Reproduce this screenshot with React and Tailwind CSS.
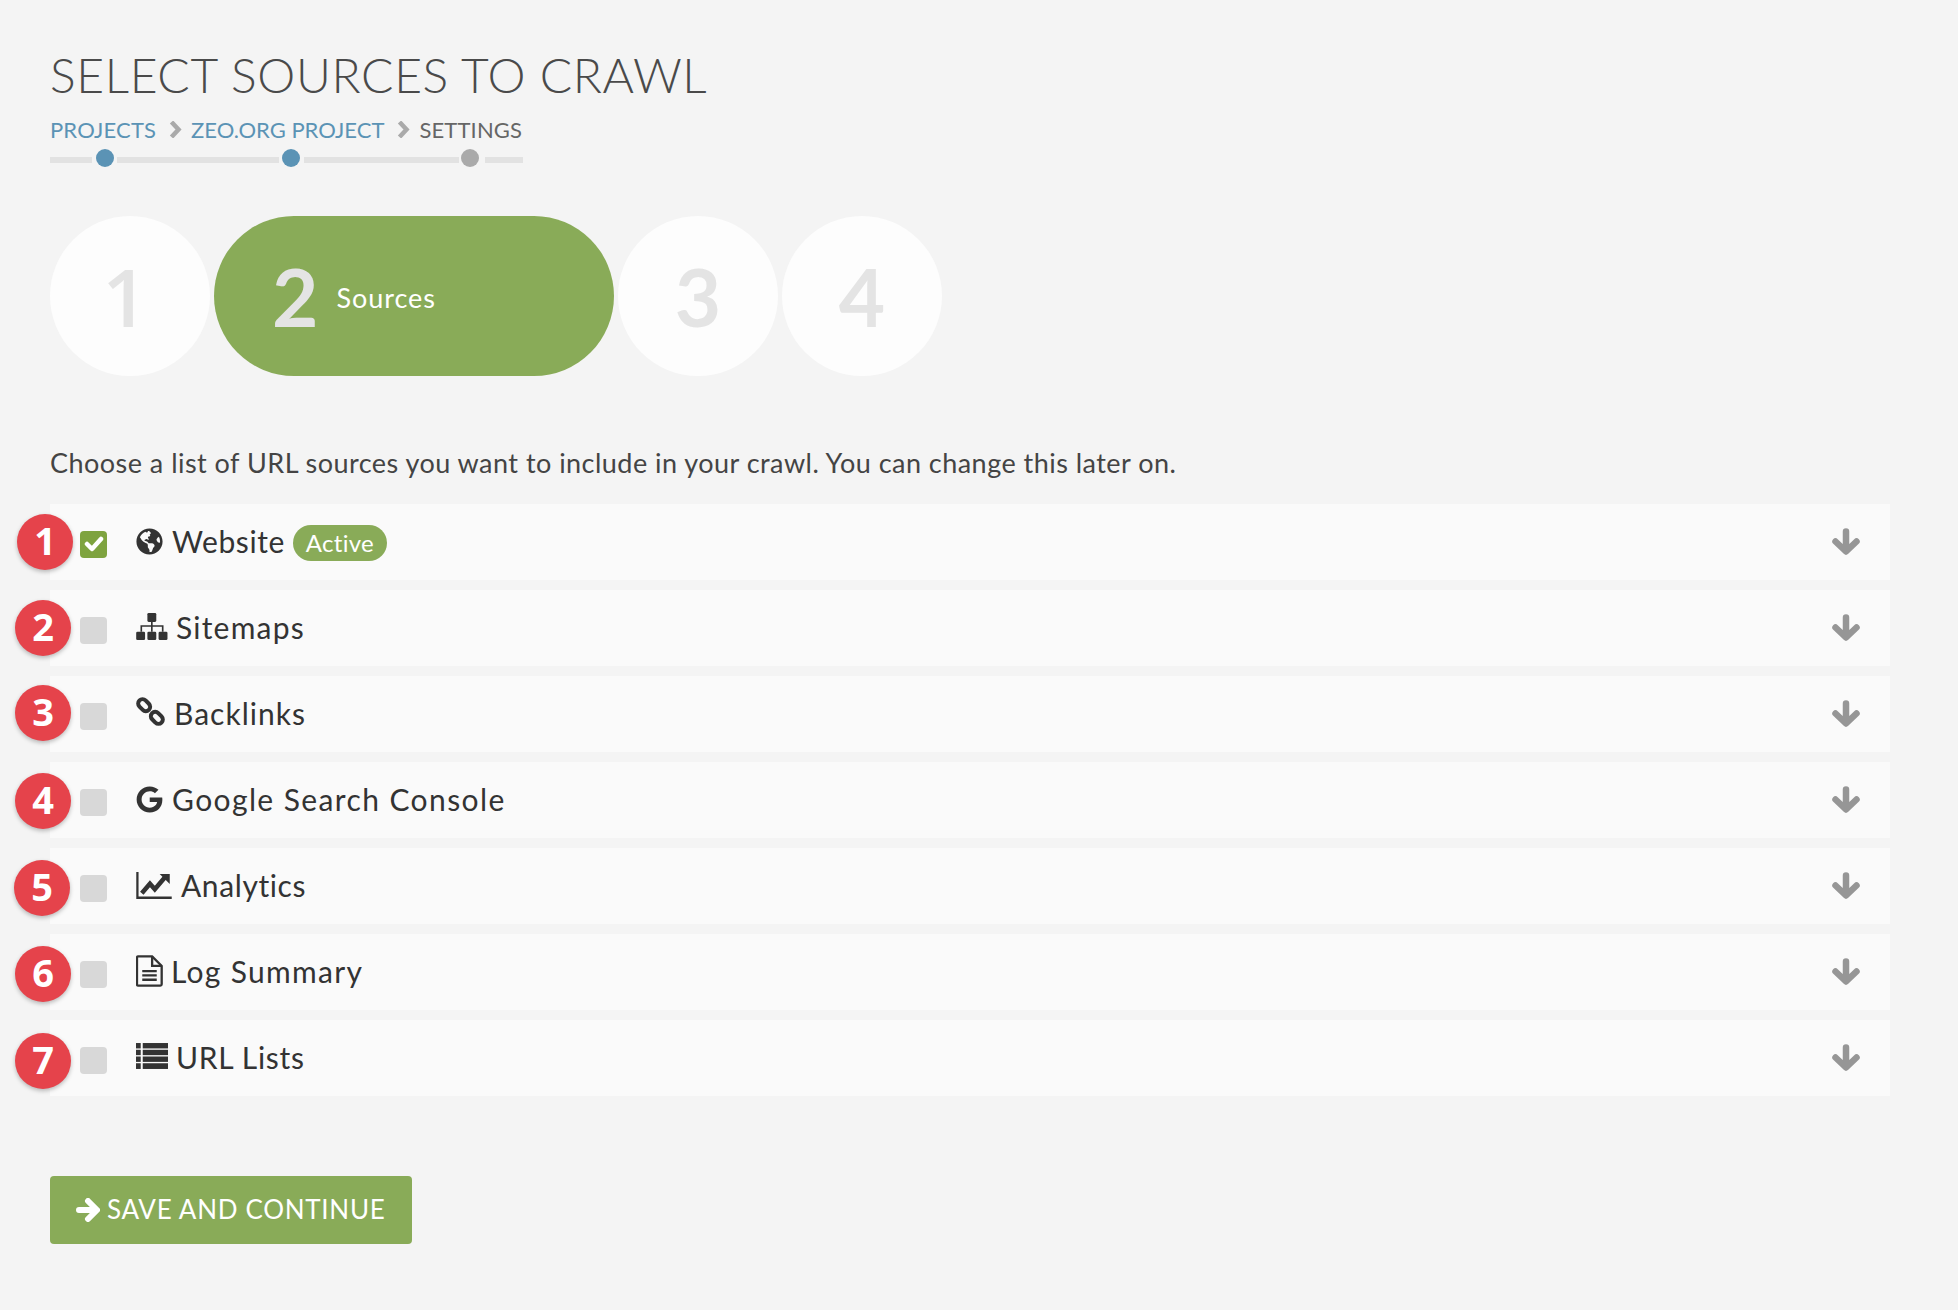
import React from 'react';
import { FaGlobeAmericas, FaGoogle } from 'react-icons/fa';

// hand drawn icons, the older font-awesome shapes are not in the package
const SitemapIcon = ({ className }) => (
  <svg viewBox="0 0 96 82" className={className} fill="currentColor">
    <rect x="34" y="0" width="27" height="27" rx="4" />
    <rect x="0" y="57" width="27" height="25" rx="4" />
    <rect x="34" y="57" width="27" height="25" rx="4" />
    <rect x="68" y="57" width="27" height="25" rx="4" />
    <path d="M45 27h5v10h33v20h-5V42H50v15h-5V42H18v15h-5V37h32z" />
  </svg>
);

const LinkIcon = ({ className }) => (
  <svg viewBox="0 0 87 87" className={className} fill="none" stroke="currentColor" strokeWidth="12">
    <rect x="-20" y="-13" width="40" height="26" rx="13" transform="translate(24.500 24.500) rotate(45)" />
    <rect x="-20" y="-13" width="40" height="26" rx="13" transform="translate(62.500 62.500) rotate(45)" />
  </svg>
);

const ChartIcon = ({ className }) => (
  <svg viewBox="0 0 109 83" className={className} fill="currentColor">
    <path d="M0 0h7v75h102v8H0z" />
    <path d="M17 65l25-29 15 17 30-35" fill="none" stroke="currentColor" strokeWidth="14" />
    <path d="M72 6h31v31z" />
  </svg>
);

const FileIcon = ({ className }) => (
  <svg viewBox="0 0 82 97" className={className} fill="none" stroke="currentColor" strokeWidth="7">
    <path d="M7 4h42l29 29v56a4 4 0 0 1-4 4H7a4 4 0 0 1-4-4V8a4 4 0 0 1 4-4z" />
    <path d="M49 4v29h29" />
    <path d="M19 49h44M19 62h44M19 75h44" />
  </svg>
);

const ListIcon = ({ className }) => (
  <svg viewBox="0 0 95 77" className={className} fill="currentColor">
    <rect x="0" y="0" width="14" height="16" />
    <rect x="20" y="0" width="75" height="16" />
    <rect x="0" y="20" width="14" height="16" />
    <rect x="20" y="20" width="75" height="16" />
    <rect x="0" y="40" width="14" height="16" />
    <rect x="20" y="40" width="75" height="16" />
    <rect x="0" y="60" width="14" height="17" />
    <rect x="20" y="60" width="75" height="17" />
  </svg>
);

const CheckIcon = ({ className }) => (
  <svg viewBox="0 0 20 16" className={className} fill="none" stroke="currentColor" strokeWidth="4.500" strokeLinecap="round" strokeLinejoin="round">
    <path d="M3 8l5 5 9-10" />
  </svg>
);

const DownArrow = ({ className }) => (
  <svg viewBox="0 0 28 27" className={className} fill="none" stroke="currentColor" strokeWidth="6.500" strokeLinecap="round" strokeLinejoin="round">
    <path d="M14 3.500v19M3.500 13.500l10.500 10 10.500-10" />
  </svg>
);

const RightArrow = ({ className }) => (
  <svg viewBox="0 0 24 24" className={className} fill="none" stroke="currentColor" strokeWidth="6" strokeLinecap="round" strokeLinejoin="round">
    <path d="M3 12h17M12 3l9 9-9 9" />
  </svg>
);

const Chevron = () => (
  <svg viewBox="0 0 13 17" className="ml-[13px] mr-[9px] w-[13px] h-[17px] text-[#aaa]" fill="none" stroke="currentColor" strokeWidth="4.500">
    <path d="M2.500 1l7 7.500-7 7.500" />
  </svg>
);

const sources = [
  { name: 'Website', badge: 'left-[-33px] top-[10px]', text: 'tracking-[0.6px]', icon: <FaGlobeAmericas className="w-[27px] h-[27px] mr-[9px]" />, checked: true, active: true },
  { name: 'Sitemaps', badge: 'left-[-35px] top-[10px]', text: 'tracking-[1.200px]', icon: <SitemapIcon className="w-[32px] h-[27px] mr-[8px] -mt-[2px]" /> },
  { name: 'Backlinks', badge: 'left-[-35px] top-[9px]', text: 'tracking-[1px]', icon: <LinkIcon className="w-[29px] h-[29px] mr-[9px] -mt-[4px]" /> },
  { name: 'Google Search Console', badge: 'left-[-35px] top-[11px]', text: 'tracking-[1.400px]', icon: <FaGoogle className="w-[27px] h-[27px] mr-[9px]" /> },
  { name: 'Analytics', badge: 'left-[-36px] top-[12px]', text: 'tracking-[0.6px]', icon: <ChartIcon className="w-[36px] h-[27px] mr-[9px]" /> },
  { name: 'Log Summary', badge: 'left-[-35px] top-[12px]', text: 'tracking-[1.300px]', icon: <FileIcon className="w-[27px] h-[32px] mr-[8px]" /> },
  { name: 'URL Lists', badge: 'left-[-35px] top-[13px]', text: 'tracking-[0.7px]', icon: <ListIcon className="w-[32px] h-[26px] mr-[8px] -mt-[2px]" /> },
];

const SourceRow = ({ index, source }) => (
  <div className="relative flex items-center h-[76px] mb-[10px] bg-[#fafafa]">
    <div className={`absolute ${source.badge} w-[56px] h-[56px] rounded-full bg-[#e5434b] shadow-[0_2px_4px_rgba(0,0,0,0.25)] flex items-center justify-center pb-[3px] text-white text-[38px] font-bold font-['Open_Sans']`}>
      {index + 1}
    </div>
    {source.checked ? (
      <div className="ml-[30px] mt-[4px] w-[27px] h-[27px] rounded-[4px] bg-[#7ea33f] flex items-center justify-center">
        <CheckIcon className="w-[20px] h-[16px] text-white" />
      </div>
    ) : (
      <div className="ml-[30px] mt-[4px] w-[27px] h-[27px] rounded-[4px] bg-[#d8d8d8]" />
    )}
    <div className={`ml-[29px] flex items-center text-[#333] text-[30px] -mt-[2px] ${source.text}`}>
      {source.icon}
      <span>{source.name}</span>
      {source.active && (
        <span className="ml-[8px] mt-[3px] h-[36px] w-[94px] rounded-full bg-[#89ab58] text-white text-[24px] tracking-[0.3px] flex items-center justify-center">
          Active
        </span>
      )}
    </div>
    <DownArrow className="ml-auto mr-[30px] -mt-[1px] w-[28px] h-[27px] text-[#969696]" />
  </div>
);

const StepCircle = ({ n }) => (
  <div className="w-[160px] h-[160px] rounded-full bg-[#fdfdfd] flex items-center justify-center text-[#e4e4e4] text-[80px] font-bold leading-none">
    {n}
  </div>
);

export default function App() {
  return (
    <div className="min-h-[1310px] bg-[#f4f4f4] pl-[50px] pr-[68px] pt-[44px] text-[#444]" style={{ fontFamily: '"Lato", sans-serif' }}>
      <h1 className="text-[48px] leading-[62px] font-light text-[#4a4a4a] tracking-[0.62px]">SELECT SOURCES TO CRAWL</h1>

      <div className="flex items-center mt-[8px] h-[30px] text-[22px] tracking-[0.15px]">
        <span className="text-[#5b93b5]">PROJECTS</span>
        <Chevron />
        <span className="text-[#5b93b5] tracking-[0px]">ZEO.ORG PROJECT</span>
        <Chevron />
        <span className="text-[#666]">SETTINGS</span>
      </div>

      {/* progress under the breadcrumb */}
      <div className="flex items-center mt-[5px] h-[18px]">
        <div className="w-[42px] h-[6px] mt-[3px] bg-[#e2e2e2]" />
        <div className="ml-[4px] w-[18px] h-[18px] rounded-full bg-[#5b93b5]" />
        <div className="ml-[3px] w-[162px] h-[6px] mt-[3px] bg-[#e2e2e2]" />
        <div className="ml-[3px] w-[18px] h-[18px] rounded-full bg-[#5b93b5]" />
        <div className="ml-[4px] w-[155px] h-[6px] mt-[3px] bg-[#e2e2e2]" />
        <div className="ml-[2px] w-[18px] h-[18px] rounded-full bg-[#aaa]" />
        <div className="ml-[6px] w-[38px] h-[6px] mt-[3px] bg-[#e2e2e2]" />
      </div>

      <div className="flex gap-[4px] mt-[49px]">
        <div className="w-[160px] h-[160px] rounded-full bg-[#fdfdfd] flex items-center justify-center pr-[10px] text-[#e4e4e4] text-[80px] font-semibold leading-none font-['Open_Sans']">
          1
        </div>
        <div className="w-[400px] h-[160px] rounded-full bg-[#89ab58] flex items-center pl-[58px]">
          <span className="text-[#e4e4e4] text-[80px] font-bold leading-none">2</span>
          <span className="ml-[18px] mt-[5px] text-white text-[27px] tracking-[0.95px]">Sources</span>
        </div>
        <StepCircle n={3} />
        <StepCircle n={4} />
      </div>

      <p className="mt-[67px] h-[41px] text-[27px] leading-[40px] tracking-[0.47px]">
        Choose a list of URL sources you want to include in your crawl. You can change this later on.
      </p>

      <div className="mt-[20px]">
        {sources.map((source, i) => (
          <SourceRow key={source.name} index={i} source={source} />
        ))}
      </div>

      <button className="mt-[80px] w-[362px] h-[68px] rounded-[4px] bg-[#89ab58] text-white text-[26px] flex items-center pl-[26px] pb-[1px] tracking-[0.7px]">
        <RightArrow className="w-[24px] h-[24px] mr-[7px]" />
        SAVE AND CONTINUE
      </button>
    </div>
  );
}
